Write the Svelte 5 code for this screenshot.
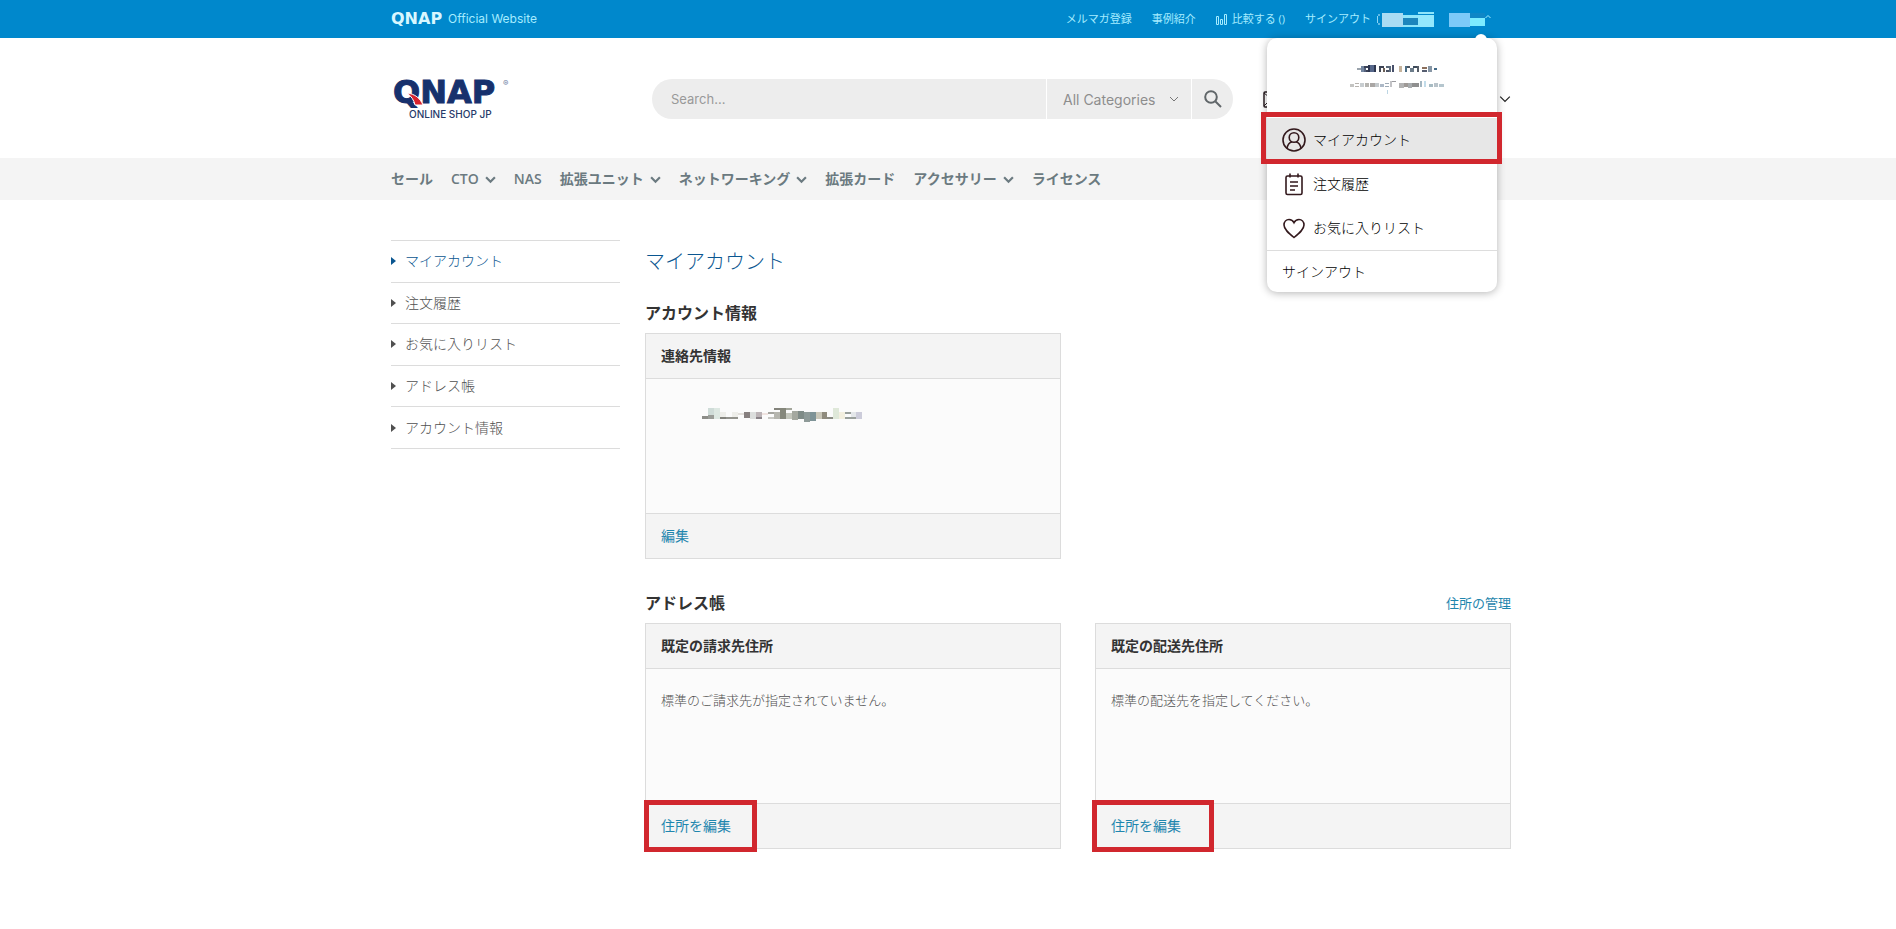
<script>
  const topLinks = ['メルマガ登録', '事例紹介']

  const navItems = [
    { label: 'セール' },
    { label: 'CTO', children: true },
    { label: 'NAS' },
    { label: '拡張ユニット', children: true },
    { label: 'ネットワーキング', children: true },
    { label: '拡張カード' },
    { label: 'アクセサリー', children: true },
    { label: 'ライセンス' }
  ]

  const sideItems = ['マイアカウント', '注文履歴', 'お気に入りリスト', 'アドレス帳', 'アカウント情報']

  const addresses = [
    { title: '既定の請求先住所', text: '標準のご請求先が指定されていません。' },
    { title: '既定の配送先住所', text: '標準の配送先を指定してください。', wide: true }
  ]

  // masked values, drawn as blocks: [x, y, width, height, fill]
  const maskedUser = [
    [0, 6, 1, 7, '#8ed6f5'], [1, 4, 2, 2, '#5fb9e6'], [1, 13, 2, 2, '#5fb9e6'],
    [5, 3, 21, 14, '#a9dcf3'], [26, 5, 15, 3, '#8ee6fb'], [26, 8, 15, 7, '#1c86bd'], [26, 15, 15, 2, '#8ee6fb'],
    [41, 2, 16, 2, '#8ee6fb'], [41, 5, 16, 12, '#93e8fd'],
    [72, 3, 21, 14, '#7cc9f8'], [93, 3, 15, 5, '#0f86c6'], [93, 8, 15, 8, '#7cecff']
  ]

  const maskedName = [
    [0, 4, 4, 2, '#9aa3ac'], [4, 2, 3, 6, '#7486a0'], [7, 2, 4, 2, '#3b4256'], [7, 4, 2, 4, '#55617c'],
    [9, 6, 3, 2, '#3b4256'], [11, 1, 2, 7, '#2c3550'], [13, 1, 4, 7, '#56678a'], [17, 1, 2, 7, '#2f3850'],
    [22, 2, 5, 2, '#3c4253'], [22, 4, 2, 4, '#464b58'], [26, 4, 2, 4, '#6b5f57'], [29, 2, 5, 2, '#5b6878'],
    [29, 6, 5, 2, '#4b5262'], [32, 2, 2, 6, '#5d6a7d'], [35, 1, 2, 7, '#47506a'], [42, 2, 3, 6, '#c5b39c'],
    [48, 2, 5, 2, '#4e5763'], [48, 2, 2, 6, '#4e6f86'], [53, 4, 4, 4, '#6c7c8a'], [56, 2, 5, 2, '#3d4a5a'],
    [60, 2, 2, 6, '#575e68'], [65, 3, 5, 2, '#8b6f5c'], [65, 6, 5, 2, '#565e70'], [71, 2, 4, 6, '#8796a5'],
    [77, 4, 3, 2, '#446b88']
  ]

  const maskedMail = [
    [0, 4, 4, 3, '#c4c4c2'], [5, 3, 4, 1, '#b7b3ae'], [5, 6, 4, 1, '#b7b3ae'], [10, 3, 4, 4, '#c8cdd0'],
    [15, 3, 4, 4, '#b6b5b1'], [20, 3, 5, 4, '#a9a6a4'], [25, 3, 4, 4, '#c4c9cc'], [30, 4, 4, 3, '#adb9c7'],
    [35, 3, 4, 1, '#9fabb6'], [35, 6, 4, 1, '#9fabb6'], [40, 1, 6, 1, '#9c9ca0'], [40, 1, 2, 6, '#c3c3c6'],
    [49, 3, 5, 5, '#b3b3b3'], [54, 3, 4, 4, '#9e9996'], [58, 3, 4, 5, '#a7abad'], [62, 3, 7, 4, '#8f8f8f'],
    [70, 1, 2, 6, '#a3b6c1'], [74, 1, 2, 6, '#c2dcea'], [79, 4, 4, 3, '#a7bbc3'], [84, 3, 4, 4, '#b9c3ca'],
    [89, 4, 5, 3, '#b5c6ce'], [37, 10, 1, 4, '#bcd6e4']
  ]

  const maskedContact = [
    [2, 9, 6, 3, '#8d8d88'], [8, 1, 6, 7, '#cfdcd8'], [8, 8, 6, 4, '#9a9d98'], [14, 1, 6, 11, '#dde8e2'],
    [20, 5, 6, 5, '#eeeeea'], [20, 10, 6, 2, '#83837d'], [26, 10, 6, 2, '#94948e'], [32, 5, 6, 5, '#eeeeea'],
    [32, 10, 6, 2, '#94948e'], [38, 6, 6, 2, '#e2dfdb'], [44, 5, 6, 6, '#87807f'], [50, 5, 6, 7, '#dcdedd'],
    [56, 5, 6, 5, '#bcb4b7'], [56, 10, 6, 2, '#8a8388'], [62, 6, 6, 2, '#efe3e0'], [68, 5, 6, 2, '#a5a5a0'],
    [68, 10, 6, 2, '#c8c8c4'], [74, 1, 6, 2, '#83837b'], [74, 5, 6, 7, '#b5b5ae'], [80, 1, 6, 11, '#85877b'],
    [86, 1, 6, 2, '#a3a69b'], [86, 6, 6, 6, '#c3c6bc'], [92, 4, 6, 9, '#a4a89f'], [98, 4, 6, 8, '#7f8b87'],
    [104, 5, 6, 10, '#8e9a98'], [110, 5, 6, 9, '#7e9397'], [116, 5, 6, 7, '#c9c7b9'], [122, 5, 5, 7, '#8f8b7d'],
    [127, 10, 6, 2, '#8c8c84'], [133, 1, 6, 11, '#dfe8d9'], [139, 5, 6, 7, '#f3efdf'], [145, 5, 6, 2, '#9aa09c'],
    [145, 10, 6, 2, '#9aa09c'], [151, 5, 5, 5, '#e4e7ea'], [151, 10, 5, 2, '#9aa09c'], [156, 5, 6, 7, '#ccccda']
  ]
</script>

{#snippet mosaic(blocks, width, height)}
  <svg {width} {height} aria-hidden="true">
    {#each blocks as [x, y, w, h, fill]}
      <rect {x} {y} width={w} height={h} {fill} />
    {/each}
  </svg>
{/snippet}

{#snippet chevron(size, stroke)}
  <svg width={size} height={size} viewBox="0 0 10 10" aria-hidden="true">
    <path d="M1 3l4 4 4-4" fill="none" stroke="currentColor" stroke-width={stroke} />
  </svg>
{/snippet}

<div class="page">
  <div class="topbar">
    <div class="container">
      <a class="official" href="/"><b>QNAP</b> Official Website</a>
      <nav class="top-links">
        {#each topLinks as link}
          <a href="/">{link}</a>
        {/each}
        <a class="compare" href="/">
          <svg width="12" height="11" viewBox="0 0 12 11" aria-hidden="true">
            <path d="M.5 10.500v-8h2v8zM4.500 10.500v-5h2v5zM8.500 10.500V.5h2v10z" fill="none" stroke="currentColor" />
          </svg>
          比較する ()
        </a>
        <a class="last" href="/">サインアウト</a>
        <div class="account">
          <button class="account-toggle" aria-label="アカウントメニュー">
            {@render mosaic(maskedUser, 108, 19)}
            <svg width="6" height="10" viewBox="0 0 6 10" aria-hidden="true">
              <path d="M.5 4L3 1.500 5.500 4" fill="none" stroke="currentColor" />
            </svg>
          </button>
          <div class="dropdown">
            <div class="who">
              {@render mosaic(maskedName, 80, 10)}
              {@render mosaic(maskedMail, 94, 14)}
            </div>
            <a class="entry current" href="/">
              <svg width="24" height="24" viewBox="0 0 24 24" aria-hidden="true">
                <circle cx="12" cy="12" r="11" />
                <circle cx="12" cy="9.500" r="4.800" />
                <path d="M5 20.500c.6-4 3-6.300 5-6.800M19 20.500c-.6-4-3-6.300-5-6.800" />
              </svg>
              マイアカウント
            </a>
            <a class="entry" href="/">
              <svg width="24" height="24" viewBox="0 0 24 24" aria-hidden="true">
                <rect x="4" y="4" width="16" height="18.500" rx="1.500" />
                <path d="M8 1.500v4M16 1.500v4M8 10h8M8 14h8M8 18h5" />
              </svg>
              注文履歴
            </a>
            <a class="entry" href="/">
              <svg width="24" height="24" viewBox="0 0 24 24" aria-hidden="true">
                <path d="M12 21.500C7 17.500 2 13.500 2 9c0-3.500 2.300-5.500 5-5.500 2.200 0 4 1.200 5 3.200 1-2 2.800-3.200 5-3.200 2.700 0 5 2 5 5.500 0 4.500-5 8.500-10 12.500z" />
              </svg>
              お気に入りリスト
            </a>
            <a class="entry signout" href="/">サインアウト</a>
          </div>
        </div>
      </nav>
    </div>
  </div>

  <header>
    <div class="container">
      <a class="logo" href="/" aria-label="QNAP Online Shop JP">
        <svg width="132" height="56" viewBox="0 0 132 56">
          <text class="wordmark" x="2" y="32">QNAP</text>
          <path d="M16 22c8 1 13 5 16 12h-8c-1-5-4-9-8-12z" fill="#d8232e" stroke="#fff" />
          <text class="reg" x="112" y="15">®</text>
          <text class="shop" x="18" y="47">ONLINE SHOP JP</text>
        </svg>
      </a>
      <form class="search">
        <input type="search" placeholder="Search..." aria-label="Search" />
        <div class="category">
          <select aria-label="Category">
            <option>All Categories</option>
          </select>
          {@render chevron(10, 1)}
        </div>
        <button type="button" aria-label="Search">
          <svg width="18" height="18" viewBox="0 0 18 18" aria-hidden="true">
            <circle cx="7" cy="7" r="5.800" />
            <path d="M11.500 11.500l5.500 5.500" />
          </svg>
        </button>
      </form>
      <div class="tools">
        <svg width="22" height="17" viewBox="0 0 22 17" aria-hidden="true">
          <rect x="1" y="1" width="20" height="15" rx="1" fill="none" stroke="#2a1e22" stroke-width="1.500" />
          <path d="M1 2l10 8 10-8M1 15l7-7" fill="none" stroke="#2a1e22" />
        </svg>
        {@render chevron(12, 1)}
      </div>
    </div>
  </header>

  <nav class="mainnav">
    <div class="container">
      {#each navItems as item}
        <a href="/">
          {item.label}
          {#if item.children}
            {@render chevron(11, 2)}
          {/if}
        </a>
      {/each}
    </div>
  </nav>

  <div class="container columns">
    <ul class="sidebar">
      {#each sideItems as item, i}
        <li><a class:active={i === 0} href="/">{item}</a></li>
      {/each}
    </ul>

    <main>
      <h1>マイアカウント</h1>

      <section>
        <div class="heading">
          <h2>アカウント情報</h2>
        </div>
        <div class="cards">
          <article>
            <h3>連絡先情報</h3>
            <div class="body contact">
              {@render mosaic(maskedContact, 162, 18)}
            </div>
            <footer><a href="/">編集</a></footer>
          </article>
        </div>
      </section>

      <section>
        <div class="heading">
          <h2>アドレス帳</h2>
          <a href="/">住所の管理</a>
        </div>
        <div class="cards">
          {#each addresses as address}
            <article>
              <h3>{address.title}</h3>
              <div class="body">{address.text}</div>
              <footer class="marked" class:wide={address.wide}><a href="/">住所を編集</a></footer>
            </article>
          {/each}
        </div>
      </section>
    </main>
  </div>
</div>

<style>
  :global(body) {
    margin: 0;
    background: #fff;
  }

  .page {
    --latin: Inter, 'Noto Sans CJK JP', sans-serif;
    --red: #d1272e;
    padding-bottom: 80px;
    font-family: 'Open Sans', 'Noto Sans CJK JP', sans-serif;
    font-size: 14px;
    font-weight: 300;
    line-height: 20px;
    color: #505050;
  }

  .page *,
  .page *::before,
  .page *::after {
    box-sizing: border-box;
  }

  a {
    color: inherit;
    text-decoration: none;
  }

  svg {
    display: block;
    flex: none;
  }

  .container {
    display: flex;
    align-items: center;
    max-width: 1120px;
    margin: 0 auto;
  }

  .topbar,
  header,
  .mainnav,
  .columns {
    padding-left: 6px;
  }

  .topbar {
    background: #0088cc;
    color: #a5ecff;
    font-size: 11px;
    font-weight: 400;
  }

  .topbar .container {
    height: 38px;
    justify-content: space-between;
  }

  .official {
    display: flex;
    align-items: center;
    gap: 6px;
    font-family: var(--latin);
    font-size: 12px;
  }

  .official b {
    font-family: 'DejaVu Sans', sans-serif;
    font-size: 16px;
    color: #d8f7ff;
  }

  .top-links {
    display: flex;
    align-items: center;
    gap: 20px;
    padding-right: 20px;
  }

  .last {
    margin-right: -14px;
  }

  .compare {
    display: flex;
    align-items: center;
    gap: 4px;
  }

  .account {
    position: relative;
  }

  .account-toggle {
    display: flex;
    align-items: center;
    height: 38px;
    padding: 0;
    border: 0;
    background: none;
    color: inherit;
  }

  .dropdown {
    position: absolute;
    z-index: 1;
    top: 38px;
    right: -6px;
    width: 230px;
    border-radius: 10px;
    background: #fff;
    box-shadow: 0 1px 8px rgba(0, 0, 0, 0.3);
    font-size: 14px;
    font-weight: 300;
    color: #000;
  }

  .dropdown::before {
    content: '';
    position: absolute;
    top: -4px;
    right: 10px;
    width: 12px;
    height: 8px;
    border-radius: 6px 6px 0 0;
    background: #fff;
  }

  .who {
    display: flex;
    flex-direction: column;
    align-items: center;
    gap: 6px;
    height: 80px;
    padding: 26px 0 0 30px;
  }

  .entry {
    position: relative;
    display: flex;
    align-items: center;
    gap: 7px;
    height: 44px;
    padding: 0 15px;
  }

  .entry svg {
    fill: none;
    stroke: #33191d;
    stroke-width: 1.6;
  }

  .entry.current {
    background: #e7e7e7;
  }

  .entry.current::after {
    content: '';
    position: absolute;
    inset: -6px -5px -2px -6px;
    border: 5px solid var(--red);
  }

  .signout {
    height: 42px;
    border-top: 1px solid #ddd;
  }

  header .container {
    height: 120px;
    padding-top: 2px;
  }

  .logo {
    width: 261px;
  }

  .wordmark {
    fill: #17316d;
    stroke: #17316d;
    stroke-width: 1;
    font: bold 32px 'DejaVu Sans', sans-serif;
  }

  .reg {
    fill: #6d7ca0;
    font: 8px Inter, sans-serif;
  }

  .shop {
    fill: #263a69;
    font: 500 10px Inter, sans-serif;
  }

  .search {
    display: flex;
    flex: 0 1 581px;
    height: 40px;
    border-radius: 20px;
    background: #ededed;
    overflow: hidden;
    font-family: var(--latin);
  }

  .search input,
  .search select,
  .search button {
    padding: 0;
    border: 0;
    background: none;
    font: 13px var(--latin);
    color: #8d8d8d;
    appearance: none;
  }

  .search input {
    flex: 1;
    min-width: 0;
    padding-left: 19px;
  }

  .search input::placeholder {
    color: #999;
  }

  .category {
    display: flex;
    align-items: center;
    width: 145px;
    padding: 0 12px 0 16px;
    border-left: 1px solid #fff;
    color: #777;
  }

  .search select {
    flex: 1;
    font-size: 14px;
  }

  .search button {
    display: grid;
    place-items: center;
    width: 42px;
    border-left: 1px solid #fff;
  }

  .search button svg {
    fill: none;
    stroke: #606669;
    stroke-width: 2;
  }

  .tools {
    display: flex;
    flex: 1;
    align-items: center;
    justify-content: space-between;
    padding-left: 30px;
    color: #222;
  }

  .mainnav {
    background: #f4f4f4;
    color: #6b7a80;
    font-weight: 600;
  }

  .mainnav .container {
    height: 42px;
    gap: 18px;
  }

  .mainnav a {
    display: flex;
    align-items: center;
    gap: 6px;
  }

  .columns {
    align-items: flex-start;
    gap: 25px;
    max-width: 1126px;
    margin-top: 40px;
  }

  .sidebar {
    display: grid;
    flex: none;
    width: 229px;
    min-height: 209px;
    margin: 0;
    padding: 0;
    border-top: 1px solid #dcdcdc;
    list-style: none;
  }

  .sidebar li {
    display: grid;
    align-items: center;
    border-bottom: 1px solid #dcdcdc;
  }

  .sidebar a {
    display: flex;
    align-items: center;
    gap: 9px;
  }

  .sidebar a::before {
    content: '';
    border: solid transparent;
    border-width: 4px 0 4px 5px;
    border-left-color: currentColor;
  }

  .sidebar .active {
    color: #0a5690;
  }

  main {
    flex: 1;
    min-width: 0;
  }

  h1,
  h2,
  h3 {
    margin: 0;
    color: #333;
  }

  h1 {
    padding: 7px 0;
    font-size: 20px;
    font-weight: 300;
    line-height: 30px;
    color: #0a5690;
  }

  section {
    padding-top: 17px;
  }

  section + section {
    margin-top: 15px;
  }

  .heading {
    display: flex;
    align-items: center;
    justify-content: space-between;
    height: 32px;
    padding-bottom: 8px;
    font-size: 13px;
  }

  .heading a,
  footer a {
    color: #1f86ae;
    font-weight: 400;
  }

  h2 {
    font-size: 16px;
    line-height: 24px;
    font-weight: 700;
  }

  .cards {
    display: grid;
    grid-template-columns: 1fr 1fr;
    gap: 34px;
  }

  article {
    border: 1px solid #dcdcdc;
    background: #fbfbfb;
  }

  h3,
  footer {
    padding: 12px 15px;
    background: #f4f4f4;
    font-size: 14px;
    line-height: 20px;
  }

  h3 {
    border-bottom: 1px solid #dcdcdc;
    font-weight: 700;
  }

  .body {
    min-height: 134px;
    padding: 21px 15px;
    font-size: 13px;
  }

  .contact {
    padding: 28px 54px;
  }

  footer {
    position: relative;
    border-top: 1px solid #dcdcdc;
  }

  .marked::after {
    content: '';
    position: absolute;
    top: -4px;
    bottom: -4px;
    left: -2px;
    width: 113px;
    border: 5px solid var(--red);
  }

  .marked.wide::after {
    left: -4px;
    width: 122px;
  }
</style>
